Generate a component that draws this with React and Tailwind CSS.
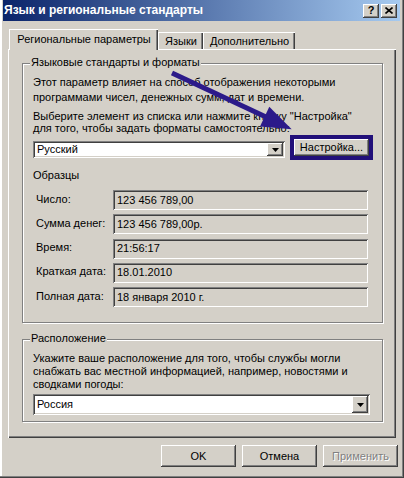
import React from "react";

const raised =
  "shadow-[inset_-1px_-1px_#404040,inset_1px_1px_#ffffff,inset_-2px_-2px_#808080,inset_2px_2px_#d4d0c8]";
const sunken =
  "shadow-[inset_1px_1px_#808080,inset_-1px_-1px_#ffffff,inset_2px_2px_#404040,inset_-2px_-2px_#d4d0c8]";

function DropArrow() {
  return (
    <div className={`w-[16px] h-full bg-[#d4d0c8] flex items-center justify-center ${raised}`}>
      <svg width="7" height="4" viewBox="0 0 7 4">
        <polygon points="0,0 7,0 3.5,4" fill="#000" />
      </svg>
    </div>
  );
}

function Combo({ value, w, h }) {
  return (
    <div className={`bg-white p-[2px] flex ${sunken}`} style={{ width: w, height: h }}>
      <div className="flex-1 pl-[2px] leading-[13px] flex items-center">{value}</div>
      <DropArrow />
    </div>
  );
}

function Field({ label, value }) {
  return (
    <div className="flex items-center h-[20px]">
      <div className="w-[80px] pl-[3px] -mt-[2px]">{label}</div>
      <div className={`w-[255px] h-[20px] flex items-center pl-[4px] ${sunken}`}>{value}</div>
    </div>
  );
}

function Btn({ children, disabled }) {
  return (
    <div className={`w-[75px] h-[22px] flex items-center justify-center ${raised}`}>
      {disabled ? (
        <span className="text-[#808080] [text-shadow:1px_1px_0_#ffffff]">{children}</span>
      ) : (
        children
      )}
    </div>
  );
}

export default function App() {
  return (
    <div className="relative w-[404px] h-[478px] bg-[#d4d0c8] font-['Liberation_Sans',Arial,sans-serif] text-[11px] leading-[13px] text-black overflow-hidden flex flex-col pl-[3px] pr-[4px] shadow-[inset_-1px_-1px_#404040,inset_-2px_-2px_#808080,inset_2px_0_#ffffff]">
      {/* Title bar */}
      <div className="h-[21px] shrink-0 bg-[linear-gradient(to_right,#0a246a,#a6caf0)] flex items-center pl-[1px] pr-[3px]">
        <span className="text-white font-bold text-[12px] flex-1">Язык и региональные стандарты</span>
        <div className={`w-[16px] h-[14px] bg-[#d4d0c8] flex items-center justify-center mr-[2px] ${raised}`}>
          <span className="font-bold text-[11px] leading-[11px]">?</span>
        </div>
        <div className={`w-[16px] h-[14px] bg-[#d4d0c8] flex items-center justify-center ${raised}`}>
          <svg width="8" height="7" viewBox="0 0 8 7">
            <path d="M0.5 0.5 L7.5 6.5 M7.5 0.5 L0.5 6.5" stroke="#000" strokeWidth="1.6" />
          </svg>
        </div>
      </div>

      {/* Tabs */}
      <div className="mt-[8px] h-[20px] flex items-end pl-[6px] shrink-0">
        <div className="relative z-10 w-[149px] h-[21px] -mb-[1px] bg-[#d4d0c8] border-t border-l border-white shadow-[inset_-1px_0_#404040,inset_-2px_0_#808080] flex items-start justify-center pt-[3px]">
          Региональные параметры
        </div>
        <div className="w-[45px] h-[17px] border-t border-l border-white shadow-[inset_-1px_0_#404040,inset_-2px_0_#808080] flex items-center justify-center">
          Языки
        </div>
        <div className="w-[92px] h-[17px] border-t border-l border-white shadow-[inset_-1px_0_#404040,inset_-2px_0_#808080] flex items-center justify-center">
          Дополнительно
        </div>
      </div>

      {/* Panel */}
      <div className="ml-[5px] w-[388px] h-[389px] shrink-0 border-t border-l border-white shadow-[inset_-1px_-1px_#404040,inset_-2px_-2px_#808080] pl-[13px] pt-[13px]">
        {/* Group 1 */}
        <div className="relative w-[361px] h-[260px] border border-[#808080] shadow-[inset_1px_1px_#ffffff,1px_1px_#ffffff] pl-[10px] pt-[11px]">
          <span className="absolute -top-[8px] left-[7px] px-[1px] bg-[#d4d0c8]">Языковые стандарты и форматы</span>
          <div className="leading-[15px]">
            Этот параметр влияет на способ отображения некоторыми
            <br />
            программами чисел, денежных сумм, дат и времени.
          </div>
          <div className="mt-[5px] leading-[12px]">
            Выберите элемент из списка или нажмите кнопку "Настройка"
            <br />
            для того, чтобы задать форматы самостоятельно:
          </div>
          <div className="flex items-start mt-[1px]">
            <div className="mt-[6px]">
              <Combo value="Русский" w={252} h={17} />
            </div>
            <div className="ml-[5px] w-[83px] h-[25px] border-[4px] border-[#22107a] bg-[#d4d0c8]">
              <div className={`w-full h-full flex items-center justify-center ${raised}`}>Настройка...</div>
            </div>
          </div>
          <div className="mt-[9px]">Образцы</div>
          <div className="mt-[8px] flex flex-col gap-[4.3px]">
            <Field label="Число:" value="123 456 789,00" />
            <Field label="Сумма денег:" value="123 456 789,00р." />
            <Field label="Время:" value="21:56:17" />
            <Field label="Краткая дата:" value="18.01.2010" />
            <Field label="Полная дата:" value="18 января 2010 г." />
          </div>
        </div>

        {/* Group 2 */}
        <div className="relative mt-[16px] w-[361px] h-[83px] border border-[#808080] shadow-[inset_1px_1px_#ffffff,1px_1px_#ffffff] pl-[10px] pt-[12px]">
          <span className="absolute -top-[8px] left-[7px] px-[1px] bg-[#d4d0c8]">Расположение</span>
          <div>
            Укажите ваше расположение для того, чтобы службы могли
            <br />
            снабжать вас местной информацией, например, новостями и
            <br />
            сводками погоды:
          </div>
          <div className="mt-[3px]">
            <Combo value="Россия" w={337} h={21} />
          </div>
        </div>
      </div>

      {/* Buttons */}
      <div className="mt-[7px] flex justify-end gap-[6px] pr-[2px]">
        <Btn>OK</Btn>
        <Btn>Отмена</Btn>
        <Btn disabled>Применить</Btn>
      </div>

      {/* Annotation arrow */}
      <svg className="absolute left-0 top-0 pointer-events-none" width="404" height="478" viewBox="0 0 404 478">
        <line x1="172" y1="73" x2="266" y2="117" stroke="#2c1a8a" strokeWidth="5" />
        <polygon points="269.3,106.7 291.7,129.3 260,126.4" fill="#2c1a8a" />
      </svg>
    </div>
  );
}
